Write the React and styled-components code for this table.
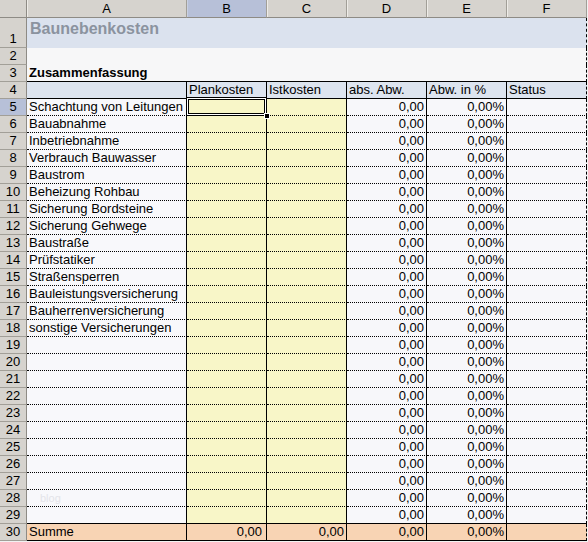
import React from "react";
import styled, { createGlobalStyle } from "styled-components";

const Global = createGlobalStyle`
  html, body { margin: 0; padding: 0; background: #f2f2f2; }
  body {
    font-family: "Liberation Sans", Arial, sans-serif;
    font-size: 13px;
    color: #000;
  }
`;

const Sheet = styled.div`
  display: grid;
  grid-template-columns: 27px 160px repeat(5, 80px);
  grid-template-rows: 18px 30px repeat(29, 17px);
  width: 587px;
`;

const HEAD_BG = "#d6d3ce";
const SEL_BG = "#b7c0d8";

const Corner = styled.div`
  box-sizing: border-box;
  background: ${HEAD_BG};
  border-right: 1px solid #8e8b85;
  border-bottom: 1px solid #8e8b85;
`;

const ColHead = styled.div`
  box-sizing: border-box;
  background: ${(p) => (p.$selected ? SEL_BG : HEAD_BG)};
  border-right: 1px solid #a29f98;
  border-bottom: 1px solid #8e8b85;
  box-shadow: inset 1px 0 0 ${(p) => (p.$selected ? "#c9d0e2" : "#eeece8")};
  text-align: center;
  line-height: 17px;
`;

const RowHead = styled.div`
  box-sizing: border-box;
  background: ${(p) => (p.$selected ? SEL_BG : HEAD_BG)};
  border-right: 1px solid #8e8b85;
  border-bottom: 1px solid #a29f98;
  display: flex;
  align-items: flex-end;
  justify-content: center;
  line-height: 16px;
`;

const Cell = styled.div`
  box-sizing: border-box;
  position: relative;
  background: ${(p) => p.$bg};
  border-right: ${(p) => p.$right || "none"};
  border-bottom: ${(p) => p.$bottom || "none"};
  padding: 0 ${(p) => p.$pr || 2}px 0 2px;
  line-height: 16px;
  white-space: nowrap;
  text-align: ${(p) => p.$align || "left"};
`;

const Title = styled.div`
  font-size: 16px;
  font-weight: bold;
  color: #8b939f;
  line-height: 19px;
  padding: 1px 0 0 1px;
`;

const Bold = styled.span`
  font-weight: bold;
`;

const Watermark = styled.span`
  display: inline-block;
  padding-left: 11px;
  font-size: 11px;
  color: #e4e4e9;
`;

const Selection = styled.div`
  position: absolute;
  left: -1px;
  top: -2px;
  right: -1px;
  bottom: -1px;
  border: 1px solid #000;
  box-shadow: inset 0 0 0 1px #fff, inset 0 0 0 2px #000;
  pointer-events: none;
  z-index: 2;
`;

const FillHandle = styled.div`
  position: absolute;
  right: -4px;
  bottom: -4px;
  width: 4px;
  height: 4px;
  background: #000;
  border: 1px solid #fff;
`;

const SOLID = "1px solid #000";
const DOTTED = "1px dotted #000";
const DASHED = "1px dashed #000";

const C = {
  title: "#dbe2ee",
  blank: "#f7f7f8",
  head: "#dde4ef",
  a: "#f8f8fb",
  yellow: "#f8f6c8",
  light: "#f7f7fa",
  sum: "#f8d4b4",
};

const items = [
  "Schachtung von Leitungen",
  "Bauabnahme",
  "Inbetriebnahme",
  "Verbrauch Bauwasser",
  "Baustrom",
  "Beheizung Rohbau",
  "Sicherung Bordsteine",
  "Sicherung Gehwege",
  "Baustraße",
  "Prüfstatiker",
  "Straßensperren",
  "Bauleistungsversicherung",
  "Bauherrenversicherung",
  "sonstige Versicherungen",
];

const cols = ["A", "B", "C", "D", "E", "F"];

function PlainRow({ n, bg, bottom, children }) {
  return (
    <>
      <RowHead>{n}</RowHead>
      {cols.map((c, i) => (
        <Cell
          key={c}
          $bg={bg}
          $bottom={bottom}
          $right={i === 5 ? DASHED : undefined}
        >
          {i === 0 ? children : null}
        </Cell>
      ))}
    </>
  );
}

function DataRow({ n, label, last, selected, watermark }) {
  const bottom = last ? SOLID : DOTTED;
  return (
    <>
      <RowHead $selected={selected}>{n}</RowHead>
      <Cell $bg={C.a} $bottom={bottom} $right={SOLID}>
        {label}
        {watermark && <Watermark>blog</Watermark>}
      </Cell>
      <Cell $bg={C.yellow} $bottom={bottom} $right={SOLID}>
        {selected && (
          <Selection>
            <FillHandle />
          </Selection>
        )}
      </Cell>
      <Cell $bg={C.yellow} $bottom={bottom} $right={SOLID} />
      <Cell $bg={C.light} $bottom={bottom} $right={SOLID} $align="right">
        0,00
      </Cell>
      <Cell $bg={C.light} $bottom={bottom} $right={SOLID} $align="right">
        0,00%
      </Cell>
      <Cell $bg={C.light} $bottom={bottom} $right={DASHED} />
    </>
  );
}

export default function App() {
  const dataRows = [];
  for (let r = 5; r <= 29; r++) {
    dataRows.push(
      <DataRow
        key={r}
        n={r}
        label={items[r - 5] || ""}
        last={r === 29}
        selected={r === 5}
        watermark={r === 28}
      />
    );
  }

  return (
    <>
      <Global />
      <Sheet>
        <Corner />
        {cols.map((c) => (
          <ColHead key={c} $selected={c === "B"}>
            {c}
          </ColHead>
        ))}

        <PlainRow n={1} bg={C.title}>
          <Title>Baunebenkosten</Title>
        </PlainRow>
        <PlainRow n={2} bg={C.blank} />
        <PlainRow n={3} bg={C.blank} bottom={SOLID}>
          <Bold>Zusammenfassung</Bold>
        </PlainRow>

        <RowHead>4</RowHead>
        <Cell $bg={C.head} $bottom={SOLID} $right={SOLID} />
        <Cell $bg={C.head} $bottom={SOLID} $right={SOLID}>Plankosten</Cell>
        <Cell $bg={C.head} $bottom={SOLID} $right={SOLID}>Istkosten</Cell>
        <Cell $bg={C.head} $bottom={SOLID} $right={SOLID}>abs. Abw.</Cell>
        <Cell $bg={C.head} $bottom={SOLID} $right={SOLID}>Abw. in %</Cell>
        <Cell $bg={C.head} $bottom={SOLID} $right={DASHED}>Status</Cell>

        {dataRows}

        <RowHead>30</RowHead>
        <Cell $bg={C.sum} $bottom={SOLID} $right={SOLID}>Summe</Cell>
        <Cell $bg={C.sum} $bottom={SOLID} $right={SOLID} $align="right" $pr={4}>0,00</Cell>
        <Cell $bg={C.sum} $bottom={SOLID} $right={SOLID} $align="right">0,00</Cell>
        <Cell $bg={C.sum} $bottom={SOLID} $right={SOLID} $align="right">0,00</Cell>
        <Cell $bg={C.sum} $bottom={SOLID} $right={SOLID} $align="right">0,00%</Cell>
        <Cell $bg={C.sum} $bottom={SOLID} $right={DASHED} />
      </Sheet>
    </>
  );
}
